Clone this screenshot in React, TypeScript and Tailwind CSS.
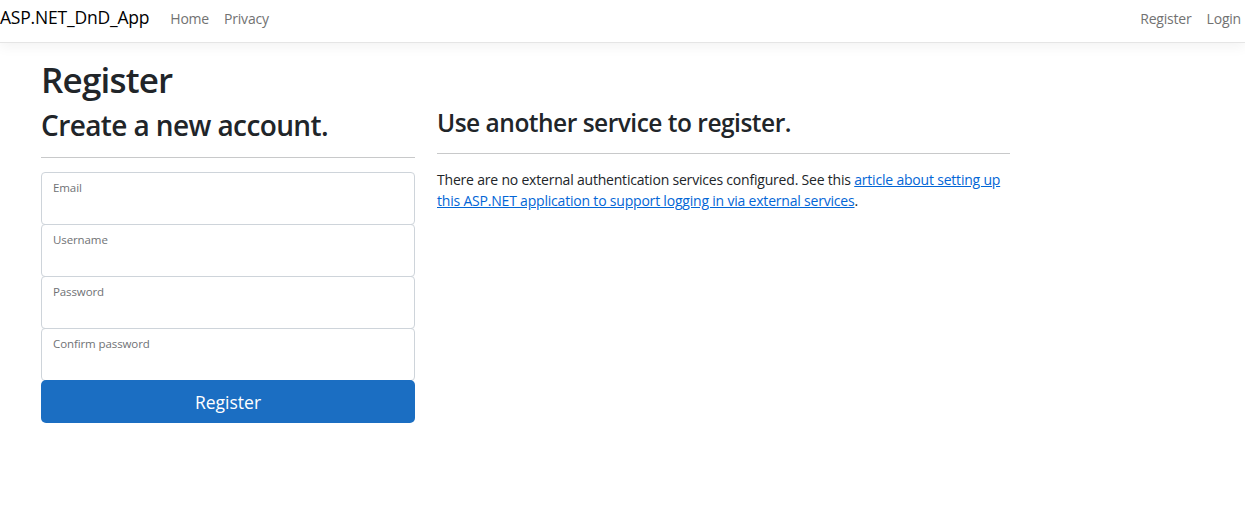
import React from 'react';

const fields = ['Email', 'Username', 'Password', 'Confirm password'];

export default function App() {
  return (
    <div className="min-h-[511px] bg-white text-[14px] text-[#212529] font-['Open_Sans','Noto_Sans',sans-serif]">
      <nav className="flex h-[43px] items-center justify-between border-b border-[#e5e5e5] bg-white pb-[6px] shadow-[0_4px_12px_rgba(0,0,0,0.05)]">
        <div className="flex items-center">
          <span className="mr-[21px] text-[17.5px] leading-none tracking-[-0.2px] text-black">ASP.NET_DnD_App</span>
          <a className="text-[14px] tracking-[-0.2px] text-[#727272]">Home</a>
          <a className="ml-[15px] text-[14px] tracking-[-0.2px] text-[#727272]">Privacy</a>
        </div>
        <div className="flex items-center pr-[4px]">
          <a className="text-[14px] tracking-[-0.2px] text-[#727272]">Register</a>
          <a className="ml-[15px] text-[14px] tracking-[-0.2px] text-[#727272]">Login</a>
        </div>
      </nav>

      <main className="pl-[41px] pt-[16px]">
        <h1 className="text-[35px] font-semibold leading-[42px] tracking-[-0.8px]">Register</h1>
        <div className="mt-[7px] flex gap-[22px]">
          <section className="w-[374px]">
            <h2 className="text-[28px] font-semibold leading-[34px] tracking-[-0.6px]">Create a new account.</h2>
            <hr className="mt-[15px] border-0 border-t border-[#c8c9ca]" />
            <form className="mt-[14px] flex flex-col">
              {fields.map((f, i) => (
                <div
                  key={f}
                  className={`h-[53px] rounded-[4px] border border-[#ced4da] px-[11px] pt-[3px] ${i > 0 ? '-mt-px' : ''}`}
                >
                  <span className="text-[11.5px] tracking-[-0.1px] text-[#6f7275]">{f}</span>
                </div>
              ))}
              <button
                type="button"
                className="-mt-px h-[43px] rounded-[5px] bg-[#1b6ec2] pt-[2px] text-[17.5px] text-white"
              >
                Register
              </button>
            </form>
          </section>

          <section className="w-[573px]">
            <h3 className="text-[24.5px] font-semibold leading-[29px] tracking-[-0.5px]">Use another service to register.</h3>
            <hr className="mt-[16px] border-0 border-t border-[#c8c9ca]" />
            <p className="mt-[15px] leading-[21px] tracking-[-0.2px]">
              There are no external authentication services configured. See this{' '}
              <a className="text-[#0366d6] underline">
                article about setting up this ASP.NET application to support logging in via external services
              </a>
              .
            </p>
          </section>
        </div>
      </main>
    </div>
  );
}
